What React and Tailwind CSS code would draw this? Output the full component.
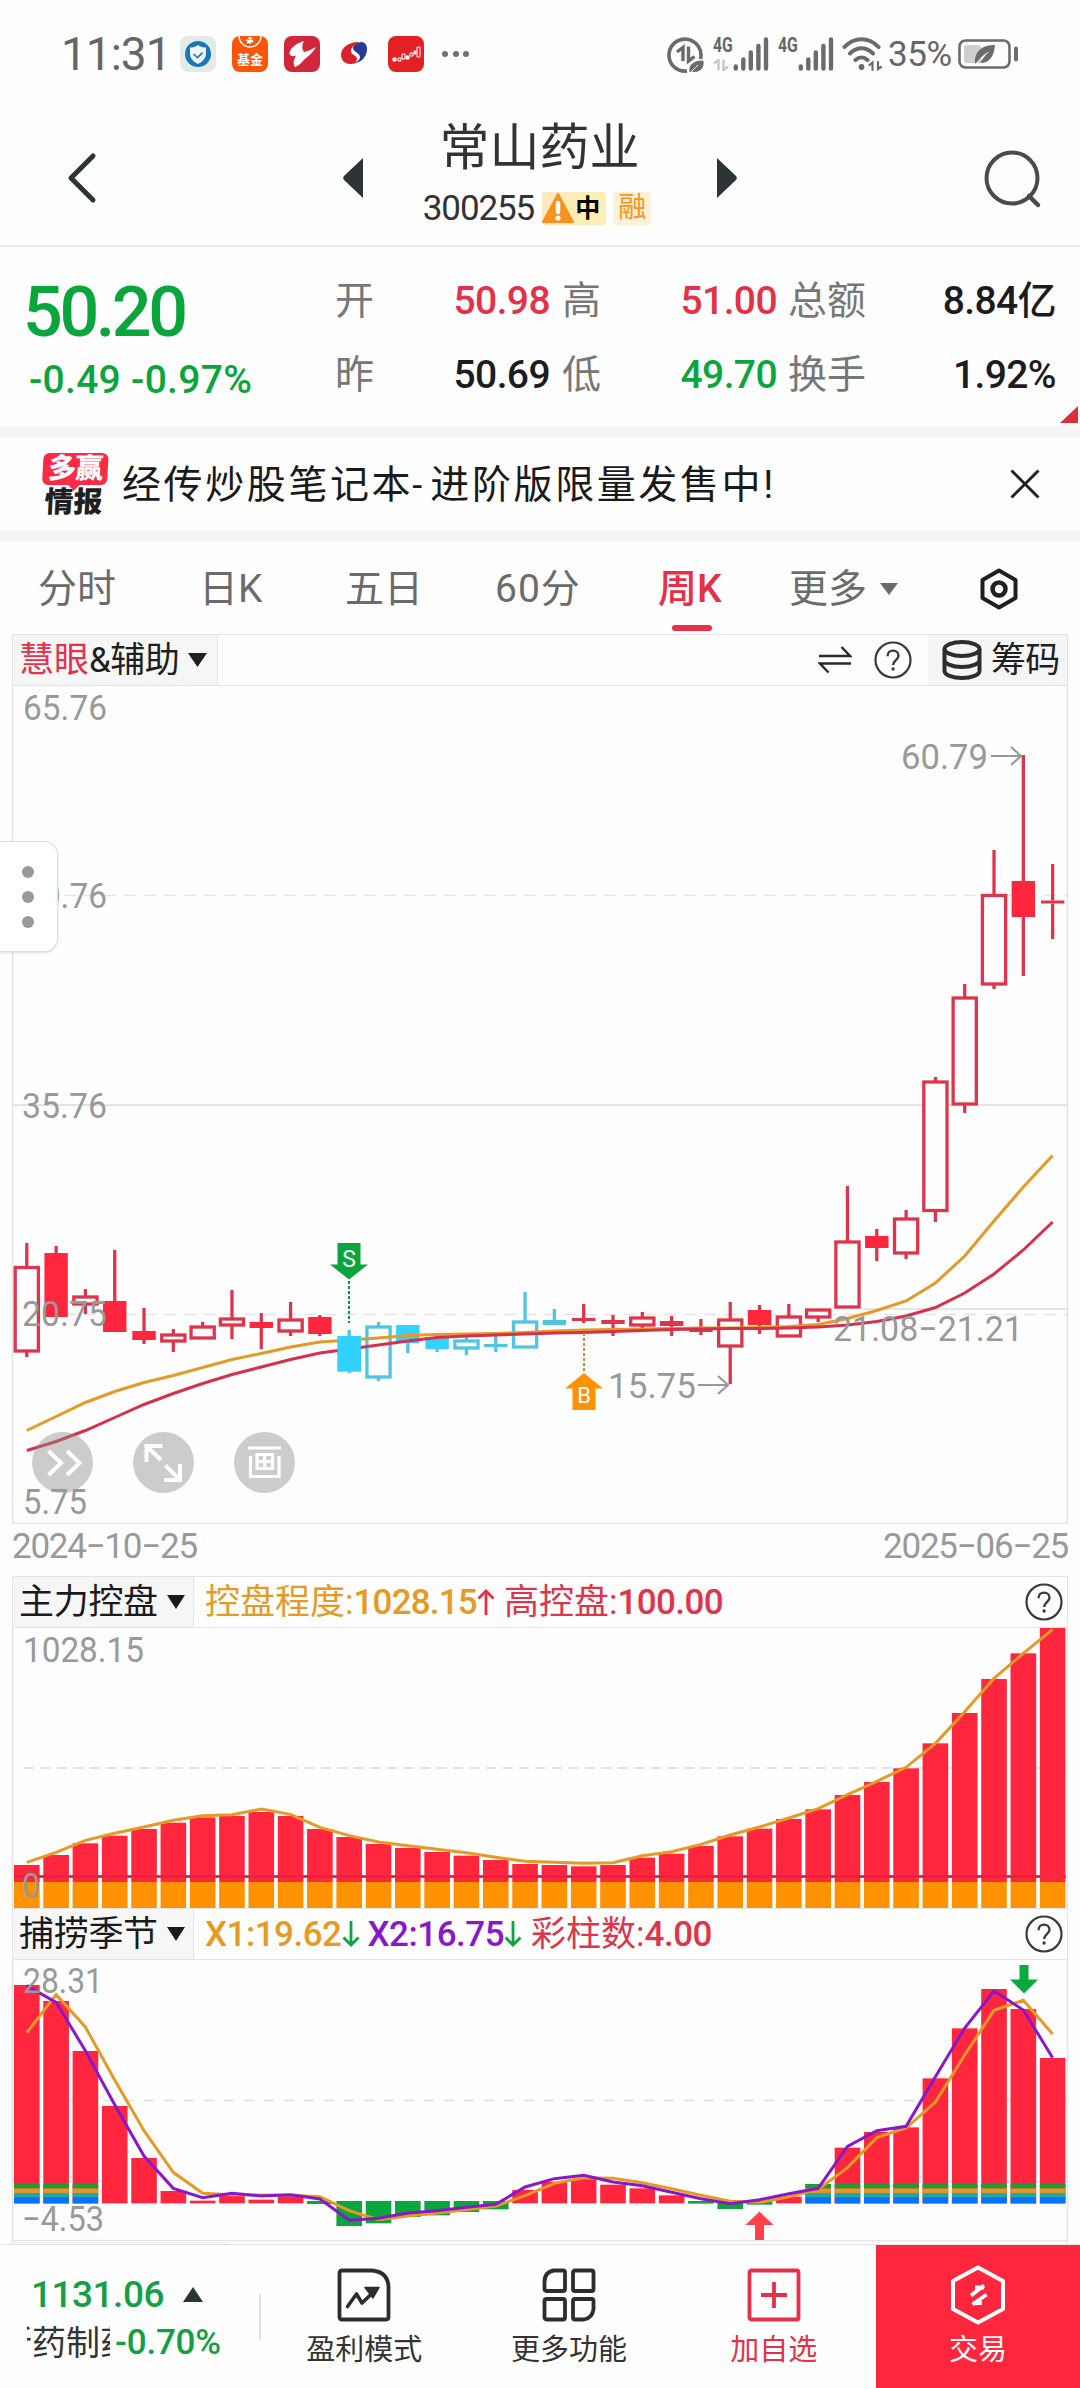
import React from "react";

const RED = "#ff263e";
const LINE_RED = "#dc354c";
const CYAN = "#33d1ff";
const LINE_CYAN = "#4fc5e4";
const GREEN = "#0aa53c";
const ORANGE = "#ff9200";
const LINE_ORANGE = "#e59a25";
const PURPLE = "#8a18c8";
const GREY = "#999999";

const STEP = 29.31;
const cx = (i) => 26.8 + i * STEP;
const toPoints = (ys) => ys.map((y, i) => `${cx(i).toFixed(1)},${y}`).join(" ");

/* [kind, high, bodyTop, bodyBottom, low]: r/c = red/cyan, h/f = hollow/filled */
const CANDLES = [
  ["rh", 1243, 1267.5, 1351, 1357],
  ["rf", 1246, 1253, 1317, 1317],
  ["rh", 1289, 1297, 1304, 1314],
  ["rf", 1250, 1301, 1332, 1332],
  ["rf", 1308, 1331, 1340, 1344],
  ["rh", 1329, 1335, 1341, 1352],
  ["rh", 1322, 1327, 1338, 1338],
  ["rh", 1290, 1319, 1325, 1339],
  ["rf", 1313, 1322, 1328, 1349],
  ["rh", 1302, 1320, 1331, 1336],
  ["rf", 1315, 1317, 1334, 1336],
  ["cf", 1330, 1336, 1371.5, 1373],
  ["ch", 1322, 1327, 1377, 1381],
  ["cf", 1325, 1325, 1343, 1353],
  ["cf", 1336, 1337, 1349, 1352],
  ["ch", 1337, 1341, 1348, 1355],
  ["cf", 1332, 1344, 1347, 1352],
  ["ch", 1292, 1322, 1347, 1347],
  ["cf", 1309, 1320, 1325, 1325],
  ["rf", 1304, 1318, 1321, 1323],
  ["rf", 1315, 1320, 1324, 1336],
  ["rh", 1312, 1318, 1325, 1329],
  ["rf", 1316, 1321, 1326, 1336],
  ["rf", 1319, 1329, 1332, 1335],
  ["rh", 1302, 1320, 1346, 1384],
  ["rf", 1305, 1310, 1325, 1334],
  ["rh", 1304, 1317, 1336, 1336],
  ["rh", 1310, 1310, 1317, 1322],
  ["rh", 1186, 1242, 1307, 1307],
  ["rf", 1229, 1236, 1248, 1261],
  ["rh", 1210, 1219, 1253, 1259],
  ["rh", 1077, 1082, 1210.5, 1222],
  ["rh", 984, 998, 1104, 1113],
  ["rh", 850, 895.5, 984, 989],
  ["rf", 755, 881, 917, 976],
  ["rf", 864, 900.5, 903.5, 939],
];

const MA_SHORT = [
  1430.5, 1416.5, 1402.5, 1391.5, 1382.5, 1375.5, 1367.5, 1359.5, 1353.5, 1347, 1342, 1340, 1338, 1335.5, 1334.5,
  1334, 1333.5, 1332.5, 1331, 1330, 1329.5, 1329, 1328.5, 1328, 1328, 1327.5, 1326.5, 1324.5, 1318.5, 1310.5,
  1301, 1283, 1256, 1221, 1187, 1155.5,
];
const MA_LONG = [
  1450.5, 1441.5, 1430.5, 1417.5, 1404.5, 1393.5, 1383.5, 1374.5, 1367, 1359.5, 1353, 1349, 1345, 1341, 1337.5,
  1336, 1335, 1334, 1333, 1332.5, 1331.5, 1330.5, 1329.5, 1329, 1328.5, 1328.5, 1328, 1327, 1325, 1321.5, 1316,
  1307.5, 1293, 1274, 1250, 1222,
];

const CONTROL_TOPS = [
  885, 855, 820, 797, 777, 758, 742, 738, 726, 738, 777, 801, 822, 834, 846, 857, 870, 882, 885, 889, 885, 863,
  851, 828, 799, 776, 747, 718, 675, 636, 595, 520, 429, 327, 250, 174,
].map((v) => 1570 + v / 3);
const CONTROL_LINE = [
  877, 847, 811, 790, 771, 751, 737, 734, 717, 733, 772, 797, 816, 827, 838, 848, 862, 874, 877, 880, 878, 857,
  845, 823, 795, 771, 744, 716, 674, 634, 592, 520, 425, 325, 250, 178,
].map((v) => 1570 + v / 3);

/* [top, bottom, colour, striped] */
const SEASON_BARS = [
  [255, 910, RED, 1], [303, 910, RED, 1], [453, 910, RED, 1], [618, 910, RED], [774, 910, RED], [873, 910, RED],
  [902, 910, RED], [887, 910, RED], [899, 910, RED], [887, 910, RED], [903, 912, GREEN], [903, 978, GREEN],
  [903, 970, GREEN], [903, 951, GREEN], [903, 946, GREEN], [903, 936, GREEN], [903, 928, GREEN], [870, 910, RED],
  [845, 910, RED], [837, 910, RED], [854, 910, RED], [865, 910, RED], [886, 910, RED], [903, 911, GREEN],
  [903, 927, GREEN], [903, 914, GREEN], [890, 910, RED], [852, 910, RED, 1], [743, 910, RED, 1],
  [696, 910, RED, 1], [682, 910, RED, 1], [535, 910, RED, 1], [385, 910, RED, 1], [267, 910, RED, 1],
  [327, 910, RED, 1], [474, 910, RED, 1],
].map(([t, b, c, s]) => [1900 + t / 3, 1900 + b / 3, c, s]);
const STRIPES = [
  [2184, 4.5, "#1c9d38"],
  [2188.5, 4.5, "#dc9a28"],
  [2193, 4.5, "#22a5a6"],
  [2197.5, 6, "#0873f4"],
];
const X1_LINE = [
  398, 284, 381, 540, 692, 817, 880, 884, 885, 886, 890, 932, 959, 948, 939, 929, 918, 887, 850, 833, 835, 848,
  866, 886, 904, 907, 890, 868, 803, 713, 684, 606, 465, 331, 301, 402,
].map((v) => 1900 + v / 3);
const X2_LINE = [
  257, 307, 452, 614, 768, 865, 893, 880, 888, 884, 897, 961, 955, 939, 932, 922, 913, 861, 836, 826, 846, 857,
  877, 896, 911, 899, 881, 865, 739, 692, 679, 530, 384, 273, 330, 473,
].map((v) => 1900 + v / 3);

const AxisText = ({ x, y, w, children, fill = GREY, size = 35 }) => (
  <text x={x} y={y} fontSize={size} fill={fill} textLength={w} lengthAdjust="spacingAndGlyphs">
    {children}
  </text>
);

const Help = () => (
  <svg className="h-[38px] w-[38px] shrink-0" viewBox="0 0 38 38" fill="none" stroke="#3a3a3a">
    <circle cx="19" cy="19" r="17.5" strokeWidth="2.2" />
    <path d="M13.5 15.2c0-3.4 2.4-5.6 5.5-5.6s5.5 2.1 5.5 5.2c0 4.2-5.4 4.6-5.4 9.3" strokeWidth="2.4" />
    <circle cx="19.1" cy="28" r="1" strokeWidth="1.4" fill="#3a3a3a" />
  </svg>
);

const Caret = ({ className }) => (
  <svg className={className} viewBox="0 0 17 14" preserveAspectRatio="none">
    <path d="M0 0h17L8.5 14z" fill="currentColor" />
  </svg>
);

const MiniArrow = ({ down, className }) => (
  <svg className={className} viewBox="0 0 18 26" fill="none" stroke="currentColor" strokeWidth="2.8">
    {down ? <path d="M9 0v24M1.5 16.5L9 24l7.5-7.5" /> : <path d="M9 26V2M1.5 9.5L9 2l7.5 7.5" />}
  </svg>
);

function Signal() {
  return (
    <svg className="h-[34px] w-[36px]" viewBox="0 0 36 34" stroke="#6b6b6b" strokeWidth="4.4" strokeLinecap="round">
      <path d="M2.8 29.5v2M10.3 22.5v9M17.8 15.5v16M25.4 9v22.5M33 2.5v29" />
    </svg>
  );
}

function StatusBar() {
  return (
    <div className="flex h-[108px] items-center pl-[61px] text-[#666666]">
      <div className="w-[119px] text-[46px] leading-none tracking-[-1px]">11:31</div>
      <div className="flex gap-4">
        <svg className="h-9 w-9" viewBox="0 0 36 36">
          <rect width="36" height="36" rx="8" fill="#e6e9ea" />
          <circle cx="18" cy="18" r="13" fill="#1778b5" />
          <path d="M18 9c3 2 5 2.4 8 2.6v6c0 5-3.5 8.400-8 10.400-4.500-2-8-5.400-8-10.400v-6c3-.2 5-.6 8-2.600z" fill="#eef5f8" />
          <path d="M13.500 18l4 3.600 5-5" fill="none" stroke="#1778b5" strokeWidth="1.600" />
        </svg>
        <div className="relative flex h-9 w-9 justify-center overflow-hidden rounded-lg bg-[#fb5607] pt-[17px] text-[13px] font-bold leading-none text-white">
          <svg className="absolute left-0 top-0 h-9 w-9" viewBox="0 0 36 36" fill="none" stroke="#fff" strokeWidth="1.400">
            <path d="M7 0c0 6 5 11 11 11S29 6 29 0" />
            <path d="M14 4l7 2M16 2l4 0M15 7l6-3M18 2v6" />
          </svg>
          基金
        </div>
        <svg className="h-9 w-9" viewBox="0 0 36 36">
          <rect width="36" height="36" rx="8" fill="#d2263a" />
          <path d="M20 5C13 7 6 12 5.500 17c0 3 3 4 6.500 2.500-2 4-3.500 8-1 11.500 6-2 8-7 11-9 4-3 7-6 10-11-4 2-8 4.500-12 5-2-3-2.500-6 0-11z" fill="#fff" />
        </svg>
        <svg className="h-9 w-9" viewBox="0 0 36 36">
          <path d="M24 6C13 5 5 12 5 19c0 5 4 9 9 9 4 0 7-2 7-5 0-4-6-4-6-8 0-4 4-7 9-9z" fill="#d9222c" />
          <path d="M16 28c9-1 15-7 15-15 0-4-2-7-6-7-4 1-8 3-8 6 0 4 7 5 7 9 0 3-4 6-8 7z" fill="#263a96" />
        </svg>
        <svg className="h-9 w-9" viewBox="0 0 36 36">
          <rect width="36" height="36" rx="8" fill="#e32124" />
          <path d="M5 22h3v3H5zM10 22h3v3h-3zM14 18h3v5h-3zM18 20h3v3h-3zM22 17h3v3h-3zM26 15h2v3h-2zM29 11h3v10h-3z" fill="none" stroke="#fff" strokeWidth="1" />
          <path d="M5 22h3v3H5zM18 20h3v3h-3zM26 15h2v3h-2z" fill="#fff" />
        </svg>
      </div>
      <div className="ml-[18px] flex gap-[4.500px]">
        <i className="h-1.5 w-1.5 rounded-full bg-[#707070]" />
        <i className="h-1.5 w-1.5 rounded-full bg-[#707070]" />
        <i className="h-1.5 w-1.5 rounded-full bg-[#707070]" />
      </div>
      <div className="ml-auto flex items-center pr-[61px]">
        <svg className="mt-0.5 h-[37px] w-[37px]" viewBox="0 0 37 37" fill="none" stroke="#6b6b6b">
          <path d="M33.500 22A16 16 0 1 0 20 34" strokeWidth="3.600" />
          <path d="M10 15l6-4.500V24M21.500 9.500V24l6-4.500" strokeWidth="3.400" />
          <path d="M23 35c-1-7 3-11 13-11 1 7-3 11-10 10.500" fill="#6b6b6b" strokeWidth="1" />
          <path d="M23 36l8-8" stroke="#fff" strokeWidth="1" />
        </svg>
        <div className="ml-[9px] flex h-[34px] w-5 flex-col justify-between">
          <span className="origin-left scale-x-75 text-[21px] font-bold leading-[17px]">4G</span>
          <svg className="h-3 w-4" viewBox="0 0 16 12" fill="none" stroke="#c8c8c8" strokeWidth="2.400">
            <path d="M1 4.500L5.500 1v10.500M10.500 0.500V11L15 7.500" />
          </svg>
        </div>
        <Signal />
        <div className="ml-[9px] flex h-[34px] w-5 flex-col">
          <span className="origin-left scale-x-75 text-[21px] font-bold leading-[17px]">4G</span>
        </div>
        <Signal />
        <svg className="ml-[8px] h-[36px] w-[42px]" viewBox="0 0 42 36" fill="none" stroke="#6b6b6b" strokeWidth="4" strokeLinecap="round">
          <path d="M2.500 11C12 0.500 27 0.500 36.500 11M8 17.500c7-7 16-7 23 0M13.500 24c3.600-3.500 8.400-3.500 12 0" />
          <circle cx="19.500" cy="31" r="1.400" strokeWidth="3" />
          <path d="M27.500 29l3-2.500V34M36 26v7l3-2" strokeWidth="2.200" />
        </svg>
        <span className="ml-1 w-[70px] text-[35px] leading-none tracking-[-0.4px]">35%</span>
        <svg className="h-[32px] w-[61px]" viewBox="0 0 61 32">
          <rect x="1.500" y="2.500" width="50" height="27" rx="6" fill="none" stroke="#6b6b6b" strokeWidth="2.600" />
          <rect x="6" y="7" width="17" height="18" rx="3" fill="#cfcfcf" />
          <path d="M17 26c-1-12 6-19 20-19-1 12-6 18-15 18 3-5 6-9 10-12-6 3-11 8-15 13z" fill="#6b6b6b" />
          <rect x="56" y="8.500" width="4" height="15" rx="2" fill="#6b6b6b" />
        </svg>
      </div>
    </div>
  );
}

function Header() {
  return (
    <div className="flex h-[139px] items-start border-b-2 border-[#e9e9e9] text-[#333333]">
      <svg className="ml-[66px] mt-[44px] h-[52px] w-[31px]" viewBox="0 0 31 52" fill="none" stroke="#2d3436" strokeWidth="5" strokeLinecap="round" strokeLinejoin="round">
        <path d="M27 4L5 26l22 22" />
      </svg>
      <svg className="ml-[246px] mt-[50px] h-10 w-5" viewBox="0 0 20 40">
        <path d="M20 0v40L1 22q-1.500-2 0-4z" fill="#2d3436" />
      </svg>
      <div className="flex w-[354px] flex-col items-center">
        <div className="mt-[14px] pr-px text-[50px] leading-[52px]">常山药业</div>
        <div className="mt-[17px] flex h-[34px] items-center pr-1.5">
          <span className="text-[35px] leading-none tracking-[-1.1px]">300255</span>
          <span className="ml-2 flex h-[33px] items-center rounded-[3px] bg-gradient-to-r from-[#ffe9bd] to-[#fff0b4] pr-1.5">
            <svg className="h-[30px] w-8" viewBox="0 0 32 30">
              <path d="M16 1L31 29H1z" fill="#f6931c" stroke="#f6931c" strokeWidth="2" strokeLinejoin="round" />
              <path d="M16 10v9" stroke="#fff" strokeWidth="4.500" strokeLinecap="round" />
              <circle cx="16" cy="25" r="2.600" fill="#fff" />
            </svg>
            <b className="ml-px text-[25px] font-bold leading-none text-black">中</b>
          </span>
          <span className="ml-[7px] flex h-[33px] w-[38px] items-center justify-center rounded-[3px] bg-[#fff1d9] text-[28px] leading-none text-[#f8931f]">融</span>
        </div>
      </div>
      <svg className="mt-[50px] h-10 w-5" viewBox="0 0 20 40">
        <path d="M0 0v40l19-18q1.500-2 0-4z" fill="#2d3436" />
      </svg>
      <svg className="ml-[246px] mt-[41px] h-[60px] w-[60px]" viewBox="0 0 60 60" fill="none" stroke="#4a4b4d">
        <circle cx="29" cy="29" r="25.500" strokeWidth="4" />
        <path d="M46 47l9 9" strokeWidth="4.500" strokeLinecap="round" />
      </svg>
    </div>
  );
}

function Metric({ className, label, value, tone }) {
  return (
    <div className={`flex h-[49px] items-center justify-between leading-none ${className}`}>
      <span className="text-[39px] text-[#777777]">{label}</span>
      <span className={`text-[39px] font-medium tracking-[-0.6px] ${tone}`}>{value}</span>
    </div>
  );
}

function Quote() {
  return (
    <div className="relative flex h-[179px]">
      <div className="w-[335px] pt-[29px] font-medium text-[#0aa53c]">
        <div className="pl-[23px] text-[70px] leading-[72px] tracking-[-3.400px]">50.20</div>
        <div className="pl-[29px] pt-[9px] text-[39px] leading-[46px] tracking-[0.3px]">-0.49 -0.97%</div>
      </div>
      <div className="flex flex-col gap-[25px] pt-[30px]">
        <div className="flex">
          <Metric className="w-[215px]" label="开" value="50.98" tone="text-[#e5304a]" />
          <Metric className="ml-[12px] w-[215px]" label="高" value="51.00" tone="text-[#e5304a]" />
          <Metric className="ml-[11px] w-[268px]" label="总额" value="8.84亿" tone="text-[#1c1c1e]" />
        </div>
        <div className="flex">
          <Metric className="w-[215px]" label="昨" value="50.69" tone="text-[#1c1c1e]" />
          <Metric className="ml-[12px] w-[215px]" label="低" value="49.70" tone="text-[#0aa53c]" />
          <Metric className="ml-[11px] w-[268px]" label="换手" value="1.92%" tone="text-[#1c1c1e]" />
        </div>
      </div>
      <svg className="absolute bottom-[3px] right-[2px] h-[17px] w-[18px]" viewBox="0 0 18 17">
        <path d="M18 0v17H0z" fill="#e12d3a" />
      </svg>
    </div>
  );
}

function Banner() {
  return (
    <div className="flex h-[116px] items-center border-y-[12px] border-[#f6f6f6] pl-[41px]">
      <div className="flex w-[67px] -skew-x-3 flex-col items-center">
        <div className="relative flex h-8 w-[65px] items-center justify-center rounded-md bg-[#fb2b46] text-[28px] font-black leading-none tracking-[-1px] text-white">
          多赢
          <i className="absolute -bottom-1 left-7 h-2 w-2 rotate-45 bg-[#fb2b46]" />
        </div>
        <div className="mt-[3px] text-[29px] font-black leading-[28px] text-[#1f1f21]">情报</div>
      </div>
      <div className="ml-[14px] whitespace-nowrap pt-[3px] text-[39px] leading-none tracking-[2.600px] text-[#1a1a1a]">
        经传炒股笔记本<span className="mx-[-1px] text-[36px]">-</span>&#8202;进阶版限量发售中!
      </div>
      <svg className="ml-auto mr-[40px] h-[30px] w-[30px]" viewBox="0 0 30 30" stroke="#222" strokeWidth="3">
        <path d="M1.500 1.500l27 27M28.500 1.500l-27 27" />
      </svg>
    </div>
  );
}

function Tabs() {
  return (
    <div className="flex h-[92px] items-start pt-[25px] text-[39px] leading-[44px] text-[#6b6b6b]">
      <span className="ml-[38px] w-[161px]">分时</span>
      <span className="w-[146px]">日K</span>
      <span className="w-[150px]">五日</span>
      <span className="w-[163px] tracking-[1px]">60分</span>
      <div className="flex w-[131px] flex-col text-[#e5304a]">
        <span className="font-medium">周K</span>
        <i className="ml-[14px] mt-[14px] h-[6px] w-10 rounded-full bg-[#e8304a]" />
      </div>
      <span>更多</span>
      <Caret className="ml-[13px] mt-[16px] h-3 w-[18px]" />
      <svg className="ml-[82px] mt-px h-[42px] w-[38px]" viewBox="0 0 38 42" fill="none" stroke="#1f1f21" strokeLinejoin="round">
        <path d="M19 2.500L35.500 12v18L19 39.500 2.500 30V12z" strokeWidth="4" />
        <circle cx="19" cy="21" r="6.500" strokeWidth="4.500" />
      </svg>
    </div>
  );
}

function Kline() {
  return (
    <div className="relative h-[838px]">
      <svg className="block h-[838px] w-[1080px]" viewBox="0 686 1080 838">
        <g stroke="#e4e4e4" fill="none">
          <path d="M12.500 686V1523.500H1067.500V686" strokeWidth="1.500" />
          <path d="M24 895.500H1067M24 1314.500H1067" strokeWidth="1.500" strokeDasharray="12 8" />
          <path d="M13 1105H1067M862 1309H1067" strokeWidth="2" />
        </g>
        <g>
          {CANDLES.map(([kind, high, top, bottom, low], i) => {
            const x = cx(i);
            const red = kind[0] === "r";
            const stroke = red ? LINE_RED : LINE_CYAN;
            return (
              <g key={i}>
                <path d={`M${x} ${high}V${top}M${x} ${bottom}V${low}`} stroke={stroke} strokeWidth="3.300" />
                {kind[1] === "h" ? (
                  <rect x={x - 11.6} y={top} width="23.200" height={bottom - top} fill="#fefefe" stroke={stroke} strokeWidth="3.300" />
                ) : (
                  <rect x={x - 11.7} y={top} width="23.400" height={bottom - top} fill={bottom - top < 6 ? stroke : red ? RED : CYAN} />
                )}
              </g>
            );
          })}
        </g>
        <polyline points={toPoints(MA_SHORT)} fill="none" stroke={LINE_ORANGE} strokeWidth="3" />
        <polyline points={toPoints(MA_LONG)} fill="none" stroke="#d6304c" strokeWidth="3" />
        {/* filled cyan candle sits over the averages at the sell signal */}
        <rect x="337.500" y="1336" width="23.400" height="35.500" fill={CYAN} />
        <path d="M349 1281v42" stroke="#0f9350" strokeWidth="2" strokeDasharray="3 2" />
        <path d="M337.500 1243h23v21.500h7.500L349 1279.500l-19-15h7.500z" fill={GREEN} />
        <path d="M584 1333v39" stroke="#c9922c" strokeWidth="2" strokeDasharray="3 2" />
        <path d="M584 1373l19 15.500h-7.500V1410h-23v-21.500H565z" fill={ORANGE} />
        <text x="349" y="1266.500" fontSize="23" fill="#fff" textAnchor="middle">S</text>
        <text x="584" y="1402.500" fontSize="22" fill="#fff" textAnchor="middle">B</text>
        <AxisText x={23} y={720} w={84}>65.76</AxisText>
        <AxisText x={23} y={908} w={84}>50.76</AxisText>
        <AxisText x={22} y={1118} w={85}>35.76</AxisText>
        <AxisText x={22} y={1326} w={85}>20.75</AxisText>
        <AxisText x={901} y={769} w={87}>60.79</AxisText>
        <AxisText x={608} y={1398} w={88}>15.75</AxisText>
        <AxisText x={833} y={1341} w={190}>21.08−21.21</AxisText>
        <g fill="none" stroke={GREY} strokeWidth="2.200">
          <path d="M991 756h30M1011 747l10 9-10 9M698 1385h30M718 1376l10 9-10 9" />
        </g>
        <g fill="#8c8c8c" fillOpacity="0.430">
          <circle cx="62.500" cy="1462.500" r="30.500" />
          <circle cx="163.500" cy="1462.500" r="30.500" />
          <circle cx="264.500" cy="1462.500" r="30.500" />
        </g>
        <AxisText x={23} y={1514} w={64}>5.75</AxisText>
        <g fill="none" stroke="#fff" strokeWidth="4">
          <path d="M48.500 1451l12.500 12-12.500 12M67 1451l12.500 12-12.500 12" />
          <path d="M146.500 1462v-16h16M147 1446.500l14 13.500M180 1464v16h-16M179.500 1479.500l-14-14" />
          <path d="M248 1448h33M250.500 1456v20.500h28.500V1456M257 1454.500h15.500v14H257zM264.700 1454.500v14M257 1461.500h15.500" strokeWidth="3.200" />
        </g>
      </svg>
      <div className="absolute left-0 top-[155px] flex h-[111px] w-[58px] flex-col items-center justify-center gap-[13px] rounded-r-[14px] border border-l-0 border-[#dedede] bg-white pr-[1px] shadow">
        <i className="h-3 w-3 rounded-full bg-[#999999]" />
        <i className="h-3 w-3 rounded-full bg-[#999999]" />
        <i className="h-3 w-3 rounded-full bg-[#999999]" />
      </div>
    </div>
  );
}

function ChartHeader() {
  return (
    <div className="mx-3 flex h-[52px] items-center border border-[#e4e4e4] text-[35px] leading-none text-[#1f1f21]">
      <div className="flex h-full w-[205px] items-center border-r border-[#e4e4e4] bg-[#f6f6f6] pl-[6px]">
        <span className="text-[#e5304a]">慧眼</span>
        <span className="tracking-[-0.5px]">&amp;辅助</span>
        <Caret className="ml-[9px] h-[14px] w-[19px]" />
      </div>
      <svg className="ml-[600px] h-[30px] w-[34px]" viewBox="0 0 34 30" fill="none" stroke="#2b2b2b" strokeWidth="2.400">
        <path d="M1 11h31L23.500 2M33 18.500H2l8.500 9" />
      </svg>
      <div className="ml-[22px]">
        <Help />
      </div>
      <div className="ml-auto flex h-full w-[139px] items-center bg-[#f5f5f6] pl-[14px]">
        <svg className="h-10 w-10" viewBox="0 0 40 40" fill="none" stroke="#2b2e31" strokeWidth="4">
          <ellipse cx="20" cy="9" rx="17.500" ry="7" />
          <path d="M2.500 9v22c0 3.900 7.800 7 17.500 7s17.500-3.100 17.500-7V9M2.500 20c0 3.900 7.800 7 17.500 7s17.500-3.100 17.500-7" />
        </svg>
        <span className="ml-[9px] tracking-[-0.8px]">筹码</span>
      </div>
    </div>
  );
}

function PanelHeader({ title, children }) {
  return (
    <div className="mx-3 flex h-[52px] items-center border border-[#e4e4e4] text-[35px] leading-none">
      <div className="flex h-full w-[181px] items-center border-r border-[#e4e4e4] bg-[#f6f6f6] pl-[6px] text-[#1a1a1a]">
        <span className="tracking-[-0.3px]">{title}</span>
        <Caret className="ml-[9px] h-[14px] w-[18px]" />
      </div>
      {children}
      <div className="ml-auto mr-[4px]">
        <Help />
      </div>
    </div>
  );
}

function ControlChart() {
  return (
    <svg className="block h-[280px] w-[1080px]" viewBox="0 1628 1080 280">
      <path d="M12.500 1628V1908M1067.500 1628V1908" stroke="#e4e4e4" strokeWidth="1.500" />
      <path d="M24 1768H1067" stroke="#e2e2e2" strokeWidth="1.800" strokeDasharray="10 6.500" />
      <path d="M14 1876.500H1066" stroke="#c22c46" strokeWidth="2.600" />
      {CONTROL_TOPS.map((y, i) => (
        <g key={i}>
          <rect x={cx(i) - 12.8} y={y} width="25.600" height={1882 - y} fill={RED} />
          <rect x={cx(i) - 12.8} y="1882" width="25.600" height="26" fill={ORANGE} />
        </g>
      ))}
      <path d="M14 1876.500H1040" stroke="#b8243e" strokeOpacity="0.450" strokeWidth="2.600" />
      <polyline points={toPoints(CONTROL_LINE)} fill="none" stroke={LINE_ORANGE} strokeWidth="3" />
      <AxisText x={23} y={1662} w={121}>1028.15</AxisText>
      <AxisText x={22} y={1898} w={18}>0</AxisText>
    </svg>
  );
}

function SeasonChart() {
  return (
    <svg className="block h-[285px] w-[1080px]" viewBox="0 1960 1080 285">
      <path d="M12.500 1960V2245M1067.500 1960V2245M12 2240.500H1068" stroke="#e4e4e4" strokeWidth="1.500" />
      <path d="M13 2241.500h215v3H13z" fill="#f5f5f5" />
      <path d="M0 2244.500H1080" stroke="#e4e4e4" />
      <path d="M24 2100.500H1067" stroke="#e0e0e0" strokeWidth="1.500" strokeDasharray="10 10" />
      {SEASON_BARS.map(([top, bottom, fill, striped], i) => (
        <g key={i}>
          <rect x={cx(i) - 12.8} y={top} width="25.600" height={bottom - top} fill={fill} />
          {striped
            ? STRIPES.map(([y, h, c]) => <rect key={c} x={cx(i) - 12.8} y={y} width="25.600" height={h} fill={c} />)
            : null}
        </g>
      ))}
      <polyline points={toPoints(X1_LINE)} fill="none" stroke={LINE_ORANGE} strokeWidth="3" />
      <polyline points={toPoints(X2_LINE)} fill="none" stroke={PURPLE} strokeWidth="3" />
      <path d="M1019.500 1965h9v14.500h9.500L1024 1993.500l-14-14h9.500z" fill="#08ab3b" />
      <path d="M759.500 2211.500l14 13.500h-9.500v15h-9v-15H745.500z" fill="#ff424c" />
      <AxisText x={23} y={1993} w={80}>28.31</AxisText>
      <AxisText x={22} y={2231} w={82}>−4.53</AxisText>
    </svg>
  );
}

function NavItem({ label, className, children }) {
  return (
    <div className={`flex flex-col items-center text-[29px] leading-none ${className}`}>
      <div className="flex h-[91px] items-center pt-[9px]">{children}</div>
      <span>{label}</span>
    </div>
  );
}

function BottomNav() {
  return (
    <div className="flex h-[143px] text-[#333333]">
      <div className="flex w-[262px] items-center">
        <div className="w-[232px] pl-[27px] pt-[3px]">
          <div className="flex items-center font-medium text-[#149f47]">
            <span className="pl-[4px] text-[37px] leading-[44px] tracking-[-0.500px]">1131.06</span>
            <Caret className="ml-[19px] h-[15px] w-[20px] rotate-180 text-[#2d3436]" />
          </div>
          <div className="mt-[5px] flex items-center text-[34px] leading-[42px]">
            <span className="flex w-[83px] justify-end overflow-hidden">
              <span className="mr-[-24px] whitespace-nowrap">所药制药</span>
            </span>
            <span className="ml-[5px] whitespace-nowrap text-[35px] font-medium tracking-[-0.200px] text-[#149f47]">-0.70%</span>
          </div>
        </div>
        <i className="ml-[27px] h-[46px] w-[2px] shrink-0 bg-[#e2e2e2]" />
      </div>
      <NavItem label="盈利模式" className="flex-1">
        <svg className="h-[54px] w-[54px]" viewBox="0 0 54 54" fill="none" stroke="#2b2e31" strokeWidth="3.800" strokeLinejoin="round">
          <path d="M2.500 5q0-2.500 2.500-2.500h30Q51.500 4 51.500 20v29q0 2.500-2.500 2.500H5Q2.500 51.500 2.500 49z" />
          <path d="M10.500 38.500l9-12.500 5.500 9L36 24.500" strokeWidth="3.600" strokeLinecap="round" />
          <path d="M28 19.500h14l-6 10.500z" fill="#2b2e31" strokeWidth="1.500" />
        </svg>
      </NavItem>
      <NavItem label="更多功能" className="flex-1">
        <svg className="h-[54px] w-[54px]" viewBox="0 0 54 54" fill="none" stroke="#2b2e31" strokeWidth="3.800" strokeLinejoin="round">
          <path d="M12 2.500H21q2 0 2 2V21q0 2-2 2H4.500q-2 0-2-2V14Q2.500 4 12 2.500z" />
          <rect x="31" y="2.500" width="20.500" height="20.500" rx="2" />
          <rect x="2.500" y="31" width="20.500" height="20.500" rx="2" />
          <path d="M33 31h16.500q2 0 2 2v8q-1 9-9.500 10.500h-9q-2 0-2-2V33q0-2 2-2z" />
        </svg>
      </NavItem>
      <NavItem label="加自选" className="flex-1 text-[#e5304a]">
        <svg className="h-[54px] w-[54px]" viewBox="0 0 54 54" fill="none" stroke="#e5304a" strokeWidth="3.800">
          <rect x="2.500" y="2.500" width="49" height="49" rx="2" />
          <path d="M27 14v26M14 27h26" />
        </svg>
      </NavItem>
      <NavItem label="交易" className="w-[204px] bg-[#ff263e] text-white">
        <svg className="h-[60px] w-[56px]" viewBox="0 0 56 60" fill="none" stroke="#fff" strokeWidth="4" strokeLinejoin="round">
          <path d="M28 2.500L53 16v28L28 57.500 3 44V16z" />
          <path d="M21 30.500L34 20.500M25 22.500h9M22.500 39.500L36.500 29.500M23 38h9" strokeWidth="3.800" />
        </svg>
      </NavItem>
    </div>
  );
}

export default function App() {
  return (
    <div className="h-[2388px] w-[1080px] overflow-hidden bg-[#fefefe] font-[Roboto,'Noto_Sans_CJK_SC',sans-serif]">
      <StatusBar />
      <Header />
      <Quote />
      <Banner />
      <Tabs />
      <ChartHeader />
      <Kline />
      <div className="flex h-[52px] justify-between px-3 pt-[3px] text-[35px] leading-[40px] tracking-[-1.250px] text-[#999999]">
        <span>2024−10−25</span>
        <span>2025−06−25</span>
      </div>
      <PanelHeader title="主力控盘">
        <div className="ml-[11px] flex items-center text-[#e59a25]">
          <span>控盘程度:</span>
          <span className="font-medium tracking-[-0.800px]">1028.15</span>
          <MiniArrow className="h-[26px] w-[18px] text-[#e5304a]" />
        </div>
        <div className="ml-[9px] flex items-center text-[#dc354c]">
          <span>高控盘:</span>
          <span className="font-medium tracking-[-0.600px]">100.00</span>
        </div>
      </PanelHeader>
      <ControlChart />
      <PanelHeader title="捕捞季节">
        <div className="ml-[11px] flex items-center font-medium tracking-[-0.500px]">
          <span className="text-[#e59a25]">X1:19.62</span>
          <MiniArrow down className="h-[26px] w-[18px] text-[#0aa53c]" />
          <span className="ml-[8px] text-[#8a18c8]">X2:16.75</span>
          <MiniArrow down className="h-[26px] w-[18px] text-[#0aa53c]" />
        </div>
        <div className="ml-[9px] flex items-center text-[#dc354c]">
          <span>彩柱数:</span>
          <span className="font-medium tracking-[-0.500px]">4.00</span>
        </div>
      </PanelHeader>
      <SeasonChart />
      <BottomNav />
    </div>
  );
}
